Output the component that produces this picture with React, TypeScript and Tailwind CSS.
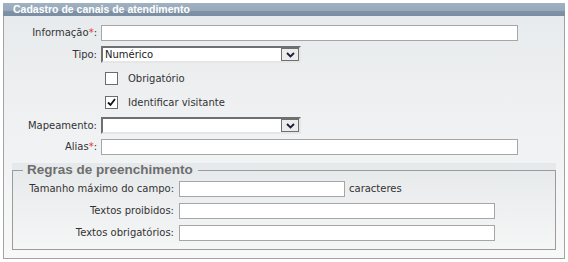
import React from "react";

const labelFont = { fontFamily: '"DejaVu Sans", Verdana, sans-serif' };

function Chevron() {
  return (
    <svg width="9" height="6" viewBox="0 0 9 6">
      <polyline points="1,1 4.5,4.5 8,1" fill="none" stroke="#1b1b3a" strokeWidth="1.8" />
    </svg>
  );
}

function Select({ value, width }: { value: string; width: string }) {
  return (
    <div
      className={`${width} h-[17px] flex items-center bg-white border-2 border-t-[#6f6f6f] border-l-[#6f6f6f] border-b-[#e6e6e6] border-r-[#e6e6e6]`}
    >
      <span className="pl-[2px] text-[10px] leading-[13px] text-[#222]">{value}</span>
      <div className="ml-auto w-[18px] h-[13px] border border-[#6f6f6f] bg-[#ececec] flex items-center justify-center">
        <Chevron />
      </div>
    </div>
  );
}

function Input({ width }: { width: string }) {
  return <div className={`${width} h-[16px] bg-white border border-[#a6a6a6]`} />;
}

function Label({ children, width }: { children: React.ReactNode; width: string }) {
  return (
    <div className={`${width} text-right text-[10px] leading-[16px] text-[#333] whitespace-nowrap`}>{children}</div>
  );
}

function Req() {
  return <span className="text-[#e3342f]">*</span>;
}

function Checkbox({ checked }: { checked?: boolean }) {
  return (
    <div className="w-[13px] h-[13px] border border-[#6b6b6b] bg-white flex items-center justify-center">
      {checked && (
        <svg width="9" height="9" viewBox="0 0 9 9">
          <polyline points="1,4.5 3.5,7 8,1" fill="none" stroke="#111" strokeWidth="1.8" />
        </svg>
      )}
    </div>
  );
}

export default function App() {
  return (
    <div className="bg-white w-[568px] h-[262px] pl-[3px] pt-[3px]" style={labelFont}>
      <div className="w-[562px]">
        <div
          className="h-[13px] pl-[10px] flex items-center text-white font-bold text-[10.5px] leading-[13px] whitespace-nowrap overflow-hidden bg-[linear-gradient(to_bottom,#a0b1c2_0,#96a8ba_8px,#7f92a6_8px,#7a8da1_100%)]"
          style={{ fontFamily: '"Liberation Sans", Arial, sans-serif' }}
        >
          Cadastro de canais de atendimento
        </div>
        <div className="border-x border-b border-[#a3a3a3] bg-[linear-gradient(to_bottom,#e8ebed,#f8f8f8)] pt-[9px] pb-[8px] flex flex-col">
          <div className="flex items-center">
            <Label width="w-[93px]">
              Informação<Req />:
            </Label>
            <div className="ml-[4px]">
              <Input width="w-[417px]" />
            </div>
          </div>
          <div className="flex items-center mt-[5px]">
            <Label width="w-[93px]">Tipo:</Label>
            <div className="ml-[4px]">
              <Select value="Numérico" width="w-[200px]" />
            </div>
          </div>
          <div className="flex items-center mt-[9px] ml-[101px] h-[13px]">
            <Checkbox />
            <span className="ml-[10px] text-[10px] leading-[13px] text-[#333]">Obrigatório</span>
          </div>
          <div className="flex items-center mt-[11px] ml-[101px] h-[13px]">
            <Checkbox checked />
            <span className="ml-[10px] text-[10px] leading-[13px] text-[#333]">Identificar visitante</span>
          </div>
          <div className="flex items-center mt-[8px]">
            <Label width="w-[93px]">Mapeamento:</Label>
            <div className="ml-[4px]">
              <Select value="" width="w-[200px]" />
            </div>
          </div>
          <div className="flex items-center mt-[5px]">
            <Label width="w-[93px]">
              Alias<Req />:
            </Label>
            <div className="ml-[4px]">
              <Input width="w-[417px]" />
            </div>
          </div>

          <div className="ml-[8px] mt-[8px] w-[544px] bg-[linear-gradient(to_bottom,#e6e9eb,#f5f6f6)]">
            <div className="flex h-[14px]">
              <div className="w-[11px] flex flex-col">
                <div className="h-[7px]" />
                <div className="flex-1 border-l border-t border-[#9c9c9c]" />
              </div>
              <div
                className="pl-[4px] pr-[5px] text-[13.5px] leading-[14px] font-bold text-[#6e6e6e] whitespace-nowrap"
                style={{ fontFamily: '"Liberation Sans", Arial, sans-serif' }}
              >
                Regras de preenchimento
              </div>
              <div className="flex-1 flex flex-col">
                <div className="h-[7px]" />
                <div className="flex-1 border-r border-t border-[#9c9c9c]" />
              </div>
            </div>
            <div className="border-x border-b border-[#9c9c9c] pt-[4px] pb-[8px] flex flex-col">
              <div className="flex items-center">
                <Label width="w-[161px]">Tamanho máximo do campo:</Label>
                <div className="ml-[5px]">
                  <Input width="w-[166px]" />
                </div>
                <span className="ml-[4px] text-[10px] leading-[16px] text-[#333]">caracteres</span>
              </div>
              <div className="flex items-center mt-[6px]">
                <Label width="w-[161px]">Textos proibidos:</Label>
                <div className="ml-[5px]">
                  <Input width="w-[316px]" />
                </div>
              </div>
              <div className="flex items-center mt-[6px]">
                <Label width="w-[161px]">Textos obrigatórios:</Label>
                <div className="ml-[5px]">
                  <Input width="w-[316px]" />
                </div>
              </div>
            </div>
          </div>
        </div>
      </div>
    </div>
  );
}
